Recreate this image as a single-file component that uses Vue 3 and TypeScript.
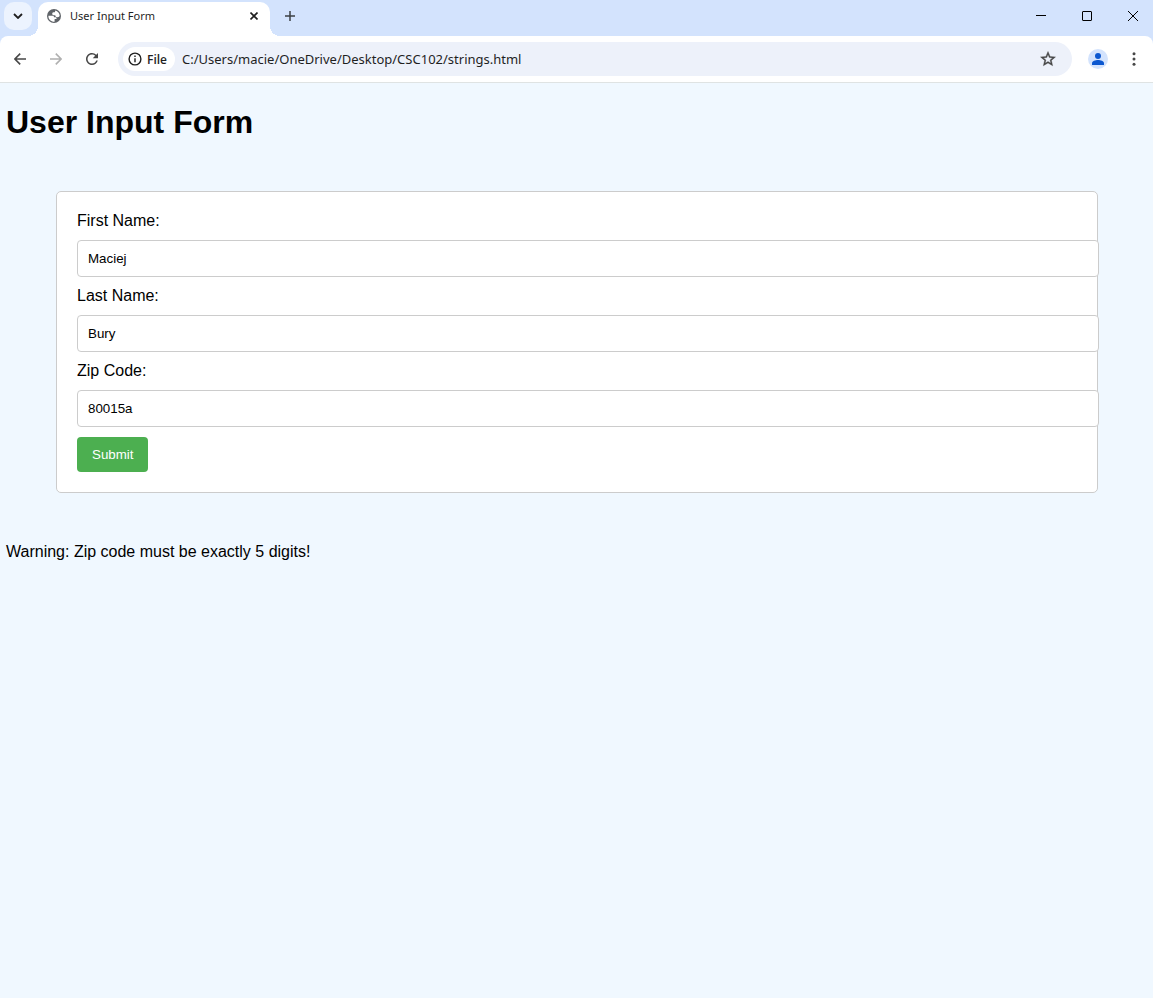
<script setup lang="ts">
import { ref } from 'vue'

interface Field {
  id: string
  label: string
  value: string
}

const fields = ref<Field[]>([
  { id: 'first-name', label: 'First Name:', value: 'Maciej' },
  { id: 'last-name', label: 'Last Name:', value: 'Bury' },
  { id: 'zip-code', label: 'Zip Code:', value: '80015a' },
])
const address = ref('C:/Users/macie/OneDrive/Desktop/CSC102/strings.html')
const message = ref('Warning: Zip code must be exactly 5 digits!')

function submit(): void {
  message.value = /^\d{5}$/.test(fields.value[2].value)
    ? `Welcome, ${fields.value[0].value} ${fields.value[1].value}!`
    : 'Warning: Zip code must be exactly 5 digits!'
}
</script>

<template>
  <div class="window">
    <header class="tab-strip">
      <button class="tab-search" type="button" aria-label="Search tabs">
        <svg width="10" height="6" viewBox="0 0 10 6"><path d="M1 1l4 4 4-4" fill="none" stroke="#1f1f1f" stroke-width="1.8" /></svg>
      </button>
      <div class="tab">
        <svg width="14" height="14" viewBox="0 0 14 14">
          <circle cx="7" cy="7" r="7" fill="#5f6368" />
          <path d="M1.400 6.700h4c1.100 0 1.700.7 1.700 1.600h1.300c.7 0 1.100.4 1.100 1v.7H7.600v2.700C4 12.800 1.200 10.200 1.400 6.700z" fill="#fff" />
          <path d="M8.200 1.500c2.700.5 4.500 2.800 4.500 5.500-.6.800-1.400 1.200-2.500 1.200-1.200 0-1.900-.7-1.900-1.900-1.900.1-3.100-.3-3.100-1.500 0-1.100.9-1.500 2.200-1.500.6 0 .8-.7.8-1.800z" fill="#fff" />
        </svg>
        <span class="tab-title">User Input Form</span>
        <button class="tab-close" type="button" aria-label="Close tab">
          <svg width="8" height="8" viewBox="0 0 8 8"><path d="M.5.5l7 7M7.5.5l-7 7" stroke="#1f1f1f" stroke-width="1.6" /></svg>
        </button>
      </div>
      <button class="new-tab" type="button" aria-label="New tab">
        <svg width="10" height="10" viewBox="0 0 10 10"><path d="M5 0v10M0 5h10" stroke="#3c4043" stroke-width="1.5" /></svg>
      </button>
      <div class="window-controls">
        <button type="button" aria-label="Minimize">
          <svg width="10" height="10" viewBox="0 0 10 10"><path d="M0 4.5h10" stroke="#000" /></svg>
        </button>
        <button type="button" aria-label="Maximize">
          <svg width="10" height="10" viewBox="0 0 10 10"><rect x=".5" y=".5" width="9" height="9" rx=".5" fill="none" stroke="#000" /></svg>
        </button>
        <button type="button" aria-label="Close">
          <svg width="10" height="10" viewBox="0 0 10 10"><path d="M0 0l10 10M10 0L0 10" stroke="#000" /></svg>
        </button>
      </div>
    </header>

    <div class="toolbar-back">
      <nav class="toolbar" aria-label="Browser toolbar">
        <button type="button" aria-label="Back">
          <svg width="12" height="12" viewBox="0 0 12 12"><path d="M12 6H1M6.200.6L.9 6l5.300 5.400" fill="none" stroke="#474747" stroke-width="1.6" /></svg>
        </button>
        <button type="button" aria-label="Forward">
          <svg width="12" height="12" viewBox="0 0 12 12"><path d="M0 6h11M5.800.6L11.100 6l-5.300 5.400" fill="none" stroke="#b0b0b0" stroke-width="1.6" /></svg>
        </button>
        <button type="button" aria-label="Reload">
          <svg width="18" height="18" viewBox="0 0 24 24"><path d="M17.65 6.35A7.958 7.958 0 0 0 12 4c-4.42 0-7.99 3.58-7.99 8s3.57 8 7.99 8c3.73 0 6.84-2.55 7.73-6h-2.08A5.99 5.99 0 0 1 12 18c-3.31 0-6-2.69-6-6s2.69-6 6-6c1.66 0 3.14.69 4.22 1.78L13 11h7V4l-2.35 2.35z" fill="#474747" /></svg>
        </button>
        <div class="omnibox">
          <button class="chip" type="button">
            <svg width="14" height="14" viewBox="0 0 14 14"><circle cx="7" cy="7" r="5.9" fill="none" stroke="#1f1f1f" stroke-width="1.4" /><path d="M7 6.200v4M7 3.600v1.500" stroke="#1f1f1f" stroke-width="1.4" /></svg>
            <span>File</span>
          </button>
          <input v-model="address" class="address" type="text" aria-label="Address" spellcheck="false">
          <button type="button" aria-label="Bookmark this page">
            <svg width="18" height="18" viewBox="0 0 24 24"><path d="M22 9.24l-7.19-.62L12 2 9.19 8.63 2 9.24l5.46 4.73L5.82 21 12 17.27 18.18 21l-1.63-7.03L22 9.24zM12 15.4l-3.76 2.27 1-4.28-3.32-2.88 4.38-.38L12 6.1l1.71 4.04 4.38.38-3.32 2.88 1 4.28L12 15.4z" fill="#474747" stroke="#474747" stroke-width=".5" /></svg>
          </button>
        </div>
        <button type="button" aria-label="Profile">
          <svg width="20" height="20" viewBox="0 0 20 20"><circle cx="10" cy="10" r="10" fill="#d3e3fd" /><circle cx="10" cy="7" r="3" fill="#0b57d0" /><path d="M4 16v-1.800c0-2 3.500-3.200 6-3.200s6 1.200 6 3.200V16z" fill="#0b57d0" /></svg>
        </button>
        <button type="button" aria-label="Menu">
          <svg width="4" height="14" viewBox="0 0 4 14" fill="#474747"><circle cx="2" cy="1.700" r="1.500" /><circle cx="2" cy="7" r="1.500" /><circle cx="2" cy="12.300" r="1.500" /></svg>
        </button>
      </nav>
    </div>

    <main class="page">
      <h1>User Input Form</h1>
      <form @submit.prevent="submit">
        <template v-for="field in fields" :key="field.id">
          <label :for="field.id">{{ field.label }}</label>
          <input :id="field.id" v-model="field.value" type="text">
        </template>
        <button class="submit" type="submit">Submit</button>
      </form>
      <p>{{ message }}</p>
    </main>
  </div>
</template>

<style>
body {
  margin: 0;
  background: #f0f8ff;
}
</style>

<style scoped>
.window {
  display: flex;
  flex-direction: column;
  min-height: 100vh;
  background: #f0f8ff;
}

svg {
  display: block;
  flex: none;
}

.tab-strip button,
.toolbar button {
  display: flex;
  align-items: center;
  justify-content: center;
  padding: 0;
  border: 0;
  background: none;
}

.tab-strip {
  display: flex;
  height: 36px;
  background: #d3e3fd;
  font-family: "Noto Sans", "Open Sans", sans-serif;
}

.tab-strip .tab-search {
  width: 28px;
  height: 28px;
  margin: 2px 6px 0 4px;
  border-radius: 10px;
  background: #ecf3fe;
}

.tab {
  position: relative;
  display: flex;
  align-items: center;
  box-sizing: border-box;
  width: 232px;
  height: 34px;
  margin-top: 2px;
  padding: 0 8px 6px 9px;
  border-radius: 10px 10px 0 0;
  background: #fff;
}

.tab::before,
.tab::after {
  content: "";
  position: absolute;
  bottom: 0;
  width: 10px;
  height: 10px;
}

.tab::before {
  right: 100%;
  background: radial-gradient(circle at 0 0, transparent 10px, #fff 10px);
}

.tab::after {
  left: 100%;
  background: radial-gradient(circle at 100% 0, transparent 10px, #fff 10px);
}

.tab-title {
  flex: 1;
  margin-left: 9px;
  color: #1f1f1f;
  font-size: 11px;
  line-height: 16px;
}

.tab-strip .tab-close {
  width: 16px;
  height: 16px;
}

.tab-strip .new-tab {
  width: 28px;
  height: 28px;
  margin: 2px 0 0 6px;
}

.window-controls {
  display: flex;
  gap: 6px;
  margin-left: auto;
}

.window-controls button {
  width: 40px;
  height: 32px;
}

.toolbar-back {
  background: #d3e3fd;
}

.toolbar {
  display: flex;
  align-items: center;
  box-sizing: border-box;
  height: 47px;
  padding: 0 1px 0 2px;
  border-bottom: 1px solid #dfe3e3;
  border-radius: 8px 8px 0 0;
  background: #fff;
  font-family: "Noto Sans", "Open Sans", sans-serif;
}

.toolbar > button {
  width: 36px;
  height: 36px;
}

.omnibox {
  display: flex;
  flex: 1;
  align-items: center;
  box-sizing: border-box;
  height: 34px;
  margin: 0 8px;
  padding: 0 15px 0 5px;
  border-radius: 17px;
  background: #edf1fa;
}

.omnibox .chip {
  gap: 5px;
  height: 24px;
  padding: 0 8px 0 5px;
  border-radius: 12px;
  background: #fff;
  color: #1f1f1f;
  font-family: "Open Sans", "Noto Sans", sans-serif;
  font-size: 12px;
  font-weight: 600;
}

.address {
  flex: 1;
  min-width: 0;
  padding: 0 7px;
  border: 0;
  outline: 0;
  background: none;
  color: #1f1f1f;
  font-family: inherit;
  font-size: 13px;
}

.page {
  flex: 1;
  padding: 0 5px 0 6px;
  color: #000;
  font-family: "Liberation Sans", Arial, sans-serif;
  font-size: 16px;
  line-height: 18px;
}

h1 {
  margin: 21px 0 51px;
  font-size: 32px;
  line-height: 36px;
}

form {
  margin: 0 50px 50px;
  padding: 20px;
  border: 1px solid #ccc;
  border-radius: 5px;
  background: #fff;
}

label {
  display: block;
}

form input {
  display: block;
  box-sizing: content-box;
  width: 100%;
  height: 15px;
  margin: 10px 0;
  padding: 10px;
  border: 1px solid #ccc;
  border-radius: 4px;
  outline: 0;
  background: #fff;
  color: #000;
  font-family: inherit;
}

.submit {
  display: block;
  padding: 10px 15px;
  border: 0;
  border-radius: 4px;
  background: #4caf50;
  color: #fff;
  font-family: inherit;
}

p {
  margin: 0;
}
</style>
